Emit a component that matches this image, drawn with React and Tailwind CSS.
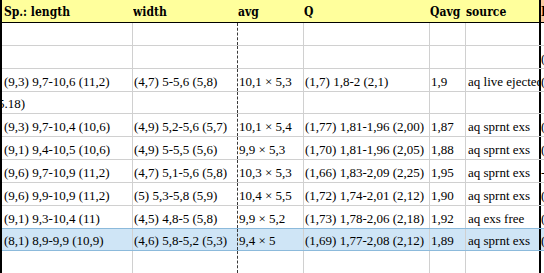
import React from 'react';

const grid = 'border-r border-[#d0d0d0]';

const cols = [
  { w: 'w-[131px]', line: grid, pad: 'pl-[2px]' },
  { w: 'w-[105px]', line: 'border-r border-dashed border-[#3a3a3a]', pad: 'pl-[1px]' },
  { w: 'w-[66px]', line: grid, pad: 'pl-[1px]' },
  { w: 'w-[126px]', line: grid, pad: 'pl-[1px]' },
  { w: 'w-[36px]', line: grid, pad: 'pl-[1px]' },
  { w: 'w-[75px]', line: 'border-r-2 border-black', pad: 'pl-[2px]' },
  { w: 'flex-1', line: '', pad: 'pl-[0px]' },
];

const headers = ['Sp.: length', 'width', 'avg', 'Q', 'Qavg', 'source', 'Ref.'];

const rows = [
  { h: 'h-[23px]', cells: [] },
  { h: 'h-[23px]', cells: ['', '', '', '', '', '', '('] },
  { h: 'h-[23px]', cells: ['(9,3) 9,7-10,6 (11,2)', '(4,7) 5-5,6 (5,8)', '10,1 × 5,3', '(1,7) 1,8-2 (2,1)', '1,9', 'aq live ejected', '('] },
  { h: 'h-[22px]', cells: ['5.18)', '', '', '', '', '', ''], shift: true },
  { h: 'h-[23px]', cells: ['(9,3) 9,7-10,4 (10,6)', '(4,9) 5,2-5,6 (5,7)', '10,1 × 5,4', '(1,77) 1,81-1,96 (2,00)', '1,87', 'aq sprnt exs', '('] },
  { h: 'h-[23px]', cells: ['(9,1) 9,4-10,5 (10,6)', '(4,9) 5-5,5 (5,6)', '9,9 × 5,3', '(1,70) 1,81-1,96 (2,05)', '1,88', 'aq sprnt exs', '('] },
  { h: 'h-[23px]', cells: ['(9,6) 9,7-10,9 (11,2)', '(4,7) 5,1-5,6 (5,8)', '10,3 × 5,3', '(1,66) 1,83-2,09 (2,25)', '1,95', 'aq sprnt exs', '-'] },
  { h: 'h-[23px]', cells: ['(9,6) 9,9-10,9 (11,2)', '(5) 5,3-5,8 (5,9)', '10,4 × 5,5', '(1,72) 1,74-2,01 (2,12)', '1,90', 'aq sprnt exs', '('] },
  { h: 'h-[23px]', cells: ['(9,1) 9,3-10,4 (11)', '(4,5) 4,8-5 (5,8)', '9,9 × 5,2', '(1,73) 1,78-2,06 (2,18)', '1,92', 'aq exs free', '('], edge: 'border-[#8cbadb]' },
  { h: 'h-[22px]', cells: ['(8,1) 8,9-9,9 (10,9)', '(4,6) 5,8-5,2 (5,3)', '9,4 × 5', '(1,69) 1,77-2,08 (2,12)', '1,89', 'aq sprnt exs', '('], selected: true },
  { h: 'h-[23px]', cells: [] },
];

const Row = ({ row }) => (
  <div
    className={`flex ${row.h} border-b ${row.edge || (row.selected ? 'border-[#8cbadb]' : 'border-[#d0d0d0]')} ${
      row.selected ? 'bg-[#cfe5f6]' : 'bg-white'
    }`}
  >
    {cols.map((c, i) => (
      <div
        key={i}
        className={`${c.w} ${c.line} ${c.pad} shrink-0 overflow-hidden whitespace-nowrap flex items-end pb-[2px]`}
      >
        <span className={`leading-[15px] ${row.shift && i === 0 ? '-ml-[6px]' : ''}`}>{row.cells[i] || ''}</span>
      </div>
    ))}
  </div>
);

export default function App() {
  return (
    <div className="w-[544px] h-[273px] overflow-hidden bg-white text-black">
      <div className="border-l-2 border-black h-full font-['Liberation_Serif',serif] text-[13px]">
        {/* header */}
        <div className="flex h-[23px] border-b border-black bg-[#ffff9c] font-['DejaVu_Serif_Condensed','DejaVu_Serif',serif] font-stretch-condensed font-bold text-[12px]">
          {headers.map((h, i) => (
            <div
              key={i}
              className={`${cols[i].w} shrink-0 overflow-hidden whitespace-nowrap pt-[5px] leading-[14px] ${
                i === 0 ? 'pl-[2px]' : i === 6 ? 'pl-0 bg-[#f8c9a0]' : 'pl-0'
              } ${i === 5 ? 'border-r-2 border-black' : ''}`}
            >
              {h}
            </div>
          ))}
        </div>
        {rows.map((r, i) => (
          <Row key={i} row={r} />
        ))}
      </div>
    </div>
  );
}
